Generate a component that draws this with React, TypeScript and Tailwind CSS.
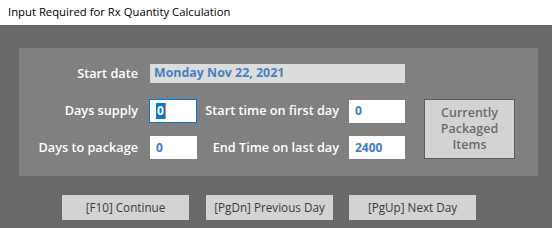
const font = { fontFamily: '"Open Sans", "Noto Sans", sans-serif' };

function Field({ value, width, height, focused = false }: { value: string; width: string; height: string; focused?: boolean }) {
  return (
    <div
      className={`flex items-center bg-white pl-[6px] text-[12px] font-bold text-[#3f7dc4] ${width} ${height} ${
        focused ? 'border border-[#0078d7] pl-[5px]' : ''
      }`}
    >
      {focused ? (
        <>
          <span className="bg-[#0078d7] px-[1px] leading-[16px] text-white">{value}</span>
          <span className="h-[16px] w-[1px] bg-[#e8812b]" />
        </>
      ) : (
        <span>{value}</span>
      )}
    </div>
  );
}

function Label({ text, width }: { text: string; width: string }) {
  return <div className={`${width} text-right text-[12.7px] font-semibold text-white`}>{text}</div>;
}

export default function App() {
  return (
    <div className="h-[228px] w-[552px] overflow-hidden bg-[#696969]" style={font}>
      {/* Title bar */}
      <div className="flex h-[25px] items-center bg-white pl-[8px] text-[11.3px] text-black">
        Input Required for Rx Quantity Calculation
      </div>

      {/* Panel */}
      <div className="ml-[19px] mt-[23px] flex h-[128px] w-[519px] flex-col bg-[#808080] pt-[16px]">
        <div className="flex h-[19px] items-center">
          <Label text="Start date" width="w-[119px]" />
          <div className="ml-[12px] flex h-[19px] w-[255px] items-center bg-[#dcdcdc] pl-[4px] text-[12.4px] font-bold text-[#4a7fbd]">
            Monday Nov 22, 2021
          </div>
        </div>

        <div className="mt-[16px] flex">
          <div className="flex flex-col">
            <div className="flex h-[24px] items-center">
              <Label text="Days supply" width="w-[119px]" />
              <div className="ml-[11px]">
                <Field value="0" width="w-[48px]" height="h-[24px]" focused />
              </div>
              <Label text="Start time on first day" width="w-[142px]" />
              <div className="ml-[10px]">
                <Field value="0" width="w-[56px]" height="h-[23px]" />
              </div>
            </div>
            <div className="mt-[13px] flex h-[23px] items-center">
              <Label text="Days to package" width="w-[119px]" />
              <div className="ml-[12px]">
                <Field value="0" width="w-[47px]" height="h-[23px]" />
              </div>
              <Label text="End Time on last day" width="w-[142px]" />
              <div className="ml-[10px]">
                <Field value="2400" width="w-[56px]" height="h-[23px]" />
              </div>
            </div>
          </div>
          <div className="ml-[19px] flex h-[60px] w-[91px] flex-col items-center justify-center border border-[#5a5a5a] bg-[#d3d3d3] text-center text-[12.5px] font-semibold leading-[16px] text-[#6b6b6b]">
            <span>Currently</span>
            <span>Packaged</span>
            <span>Items</span>
          </div>
        </div>
      </div>

      {/* Buttons */}
      <div className="mt-[19px] flex pl-[62px] text-[11.7px] text-[#3a3a3a]">
        <div className="flex h-[25px] w-[127px] items-center justify-center bg-[#d3d3d3]">[F10] Continue</div>
        <div className="ml-[17px] flex h-[25px] w-[127px] items-center justify-center bg-[#d3d3d3]">[PgDn] Previous Day</div>
        <div className="ml-[16px] flex h-[25px] w-[127px] items-center justify-center bg-[#d3d3d3]">[PgUp] Next Day</div>
      </div>
    </div>
  );
}
